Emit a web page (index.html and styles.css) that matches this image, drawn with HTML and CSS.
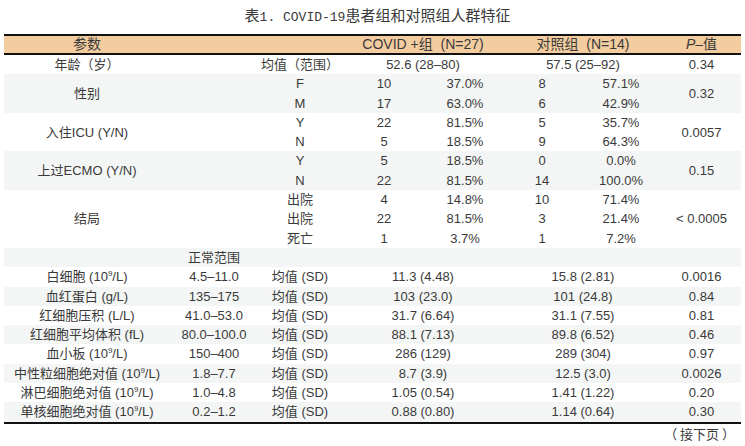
FILE: index.html
```html
<!DOCTYPE html>
<html lang="zh">
<head>
<meta charset="utf-8">
<title>表1</title>
<link rel="stylesheet" href="styles.css">
</head>
<body>
<div class="page">
  <h1 class="title">表<span class="mono">1. COVID-19</span>患者组和对照组人群特征</h1>
  <div class="table">
    <div class="row head">
      <div class="c1">参数</div>
      <div class="c45">COVID +组&nbsp; (N=27)</div>
      <div class="c67">对照组&nbsp; (N=14)</div>
      <div class="c8"><i>P</i>–值</div>
    </div>

    <div class="row g1">
      <div class="c1">年龄（岁）</div>
      <div class="c3">均值（范围）</div>
      <div class="c45">52.6 (28–80)</div>
      <div class="c67">57.5 (25–92)</div>
      <div class="c8">0.34</div>
    </div>

    <div class="row g2 alt">
      <div class="c1 span">性别</div>
      <div class="c8 span">0.32</div>
      <div class="c3">F</div><div class="c4">10</div><div class="c5">37.0%</div><div class="c6">8</div><div class="c7">57.1%</div>
      <div class="c3">M</div><div class="c4">17</div><div class="c5">63.0%</div><div class="c6">6</div><div class="c7">42.9%</div>
    </div>

    <div class="row g2">
      <div class="c1 span">入住ICU (Y/N)</div>
      <div class="c8 span">0.0057</div>
      <div class="c3">Y</div><div class="c4">22</div><div class="c5">81.5%</div><div class="c6">5</div><div class="c7">35.7%</div>
      <div class="c3">N</div><div class="c4">5</div><div class="c5">18.5%</div><div class="c6">9</div><div class="c7">64.3%</div>
    </div>

    <div class="row g2 alt">
      <div class="c1 span">上过ECMO (Y/N)</div>
      <div class="c8 span">0.15</div>
      <div class="c3">Y</div><div class="c4">5</div><div class="c5">18.5%</div><div class="c6">0</div><div class="c7">0.0%</div>
      <div class="c3">N</div><div class="c4">22</div><div class="c5">81.5%</div><div class="c6">14</div><div class="c7">100.0%</div>
    </div>

    <div class="row g3">
      <div class="c1 span">结局</div>
      <div class="c8 span">&lt; 0.0005</div>
      <div class="c3">出院</div><div class="c4">4</div><div class="c5">14.8%</div><div class="c6">10</div><div class="c7">71.4%</div>
      <div class="c3">出院</div><div class="c4">22</div><div class="c5">81.5%</div><div class="c6">3</div><div class="c7">21.4%</div>
      <div class="c3">死亡</div><div class="c4">1</div><div class="c5">3.7%</div><div class="c6">1</div><div class="c7">7.2%</div>
    </div>

    <div class="row g1 alt">
      <div class="c2">正常范围</div>
    </div>

    <div class="row g1">
      <div class="c1">白细胞 (10<sup>9</sup>/L)</div><div class="c2">4.5–11.0</div><div class="c3">均值 (SD)</div>
      <div class="c45">11.3 (4.48)</div><div class="c67">15.8 (2.81)</div><div class="c8">0.0016</div>
    </div>
    <div class="row g1 alt">
      <div class="c1">血红蛋白 (g/L)</div><div class="c2">135–175</div><div class="c3">均值 (SD)</div>
      <div class="c45">103 (23.0)</div><div class="c67">101 (24.8)</div><div class="c8">0.84</div>
    </div>
    <div class="row g1">
      <div class="c1">红细胞压积 (L/L)</div><div class="c2">41.0–53.0</div><div class="c3">均值 (SD)</div>
      <div class="c45">31.7 (6.64)</div><div class="c67">31.1 (7.55)</div><div class="c8">0.81</div>
    </div>
    <div class="row g1 alt">
      <div class="c1">红细胞平均体积 (fL)</div><div class="c2">80.0–100.0</div><div class="c3">均值 (SD)</div>
      <div class="c45">88.1 (7.13)</div><div class="c67">89.8 (6.52)</div><div class="c8">0.46</div>
    </div>
    <div class="row g1">
      <div class="c1">血小板 (10<sup>9</sup>/L)</div><div class="c2">150–400</div><div class="c3">均值 (SD)</div>
      <div class="c45">286 (129)</div><div class="c67">289 (304)</div><div class="c8">0.97</div>
    </div>
    <div class="row g1 alt">
      <div class="c1">中性粒细胞绝对值 (10<sup>9</sup>/L)</div><div class="c2">1.8–7.7</div><div class="c3">均值 (SD)</div>
      <div class="c45">8.7 (3.9)</div><div class="c67">12.5 (3.0)</div><div class="c8">0.0026</div>
    </div>
    <div class="row g1">
      <div class="c1">淋巴细胞绝对值 (10<sup>9</sup>/L)</div><div class="c2">1.0–4.8</div><div class="c3">均值 (SD)</div>
      <div class="c45">1.05 (0.54)</div><div class="c67">1.41 (1.22)</div><div class="c8">0.20</div>
    </div>
    <div class="row g1 alt last">
      <div class="c1">单核细胞绝对值 (10<sup>9</sup>/L)</div><div class="c2">0.2–1.2</div><div class="c3">均值 (SD)</div>
      <div class="c45">0.88 (0.80)</div><div class="c67">1.14 (0.64)</div><div class="c8">0.30</div>
    </div>
  </div>
  <div class="cont">（ 接下页 ）</div>
</div>
</body>
</html>
```

FILE: styles.css
```css
html, body {
  margin: 0;
  padding: 0;
  background: #ffffff;
}

body {
  font-family: "Liberation Sans", "Noto Sans CJK SC", sans-serif;
  font-size: 13px;
  color: #3a3a3a;
}

.page {
  width: 745px;
  height: 446px;
  overflow: hidden;
}

.title {
  margin: 0;
  padding-top: 5px;
  padding-left: 10px;
  height: 34px;
  box-sizing: border-box;
  text-align: center;
  font-family: "Noto Sans CJK SC", sans-serif;
  font-weight: 400;
  font-size: 15px;
  line-height: 20px;
  color: #3a3a3a;
}

.title .mono {
  font-family: "Liberation Mono", monospace;
  font-size: 13px;
}

.table {
  margin-left: 4px;
  width: 737px;
  border-top: 2px solid #111;
  border-bottom: 2px solid #111;
}

.row {
  display: grid;
  grid-template-columns: 166px 88px 84px 84px 78px 76px 82px 79px;
  align-items: center;
  text-align: center;
  white-space: nowrap;
}

.row > div {
  line-height: 19.3px;
}

.head {
  background: #f3cd9f;
  grid-template-rows: 17px;
  font-size: 14px;
  border-bottom: 2px solid #111;
}

.head > div {
  line-height: 17px;
}

.g1 { grid-template-rows: 19.3px; }
.g2 { grid-template-rows: repeat(2, 19.3px); }
.g3 { grid-template-rows: repeat(3, 19.3px); }

.alt { background: #f4f6f5; }

.c1 { grid-column: 1; }
.c2 { grid-column: 2; }
.c3 { grid-column: 3; }
.c4 { grid-column: 4; }
.c5 { grid-column: 5; }
.c6 { grid-column: 6; }
.c7 { grid-column: 7; }
.c8 { grid-column: 8; }
.c45 { grid-column: 4 / span 2; }
.c67 { grid-column: 6 / span 2; }

.span { grid-row: 1 / -1; }

sup {
  font-size: 8px;
  line-height: 0;
  vertical-align: 5px;
}

.cont {
  text-align: right;
  padding-right: 10px;
  margin-top: 1px;
  font-family: "Noto Sans CJK SC", sans-serif;
  font-size: 13px;
  line-height: 18px;
}
```
